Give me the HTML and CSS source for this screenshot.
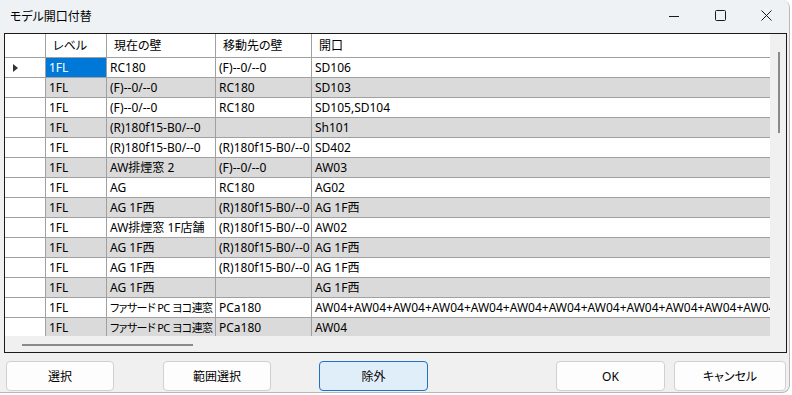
FILE: index.html
```html
<!DOCTYPE html>
<html lang="ja">
<head>
    <meta charset="UTF-8">
    <title>モデル開口付替</title>
    <link rel="stylesheet" href="styles.css">
</head>
<body>
    <div class="window">
        <div class="titlebar">
            <span class="title">モデル開口付替</span>
            <div class="controls">
                <div class="ctl">
                    <svg width="10" height="10" viewBox="0 0 10 10"><path d="M0 5.5H10" stroke="#1a1a1a" stroke-width="1"/></svg>
                </div>
                <div class="ctl">
                    <svg width="11" height="11" viewBox="0 0 11 11"><rect x="0.5" y="0.5" width="10" height="10" rx="1" fill="none" stroke="#1a1a1a" stroke-width="1"/></svg>
                </div>
                <div class="ctl">
                    <svg width="11" height="11" viewBox="0 0 11 11"><path d="M0.5 0.5L10.5 10.5M10.5 0.5L0.5 10.5" stroke="#1a1a1a" stroke-width="1"/></svg>
                </div>
            </div>
        </div>

        <div class="client">
            <div class="grid">
                <div class="grid-body">
                    <div class="rows">
                        <div class="row header">
                            <div class="cell rh"></div>
                            <div class="cell c-level">レベル</div>
                            <div class="cell c-cur">現在の壁</div>
                            <div class="cell c-dst">移動先の壁</div>
                            <div class="cell c-open">開口</div>
                        </div>
                        <div class="row">
                            <div class="cell rh"><span class="arrow"></span></div>
                            <div class="cell c-level selected">1FL</div>
                            <div class="cell c-cur">RC180</div>
                            <div class="cell c-dst">(F)--0/--0</div>
                            <div class="cell c-open">SD106</div>
                        </div>
                        <div class="row alt">
                            <div class="cell rh"></div>
                            <div class="cell c-level">1FL</div>
                            <div class="cell c-cur">(F)--0/--0</div>
                            <div class="cell c-dst">RC180</div>
                            <div class="cell c-open">SD103</div>
                        </div>
                        <div class="row">
                            <div class="cell rh"></div>
                            <div class="cell c-level">1FL</div>
                            <div class="cell c-cur">(F)--0/--0</div>
                            <div class="cell c-dst">RC180</div>
                            <div class="cell c-open">SD105,SD104</div>
                        </div>
                        <div class="row alt">
                            <div class="cell rh"></div>
                            <div class="cell c-level">1FL</div>
                            <div class="cell c-cur">(R)180f15-B0/--0</div>
                            <div class="cell c-dst"></div>
                            <div class="cell c-open">Sh101</div>
                        </div>
                        <div class="row">
                            <div class="cell rh"></div>
                            <div class="cell c-level">1FL</div>
                            <div class="cell c-cur">(R)180f15-B0/--0</div>
                            <div class="cell c-dst">(R)180f15-B0/--0</div>
                            <div class="cell c-open">SD402</div>
                        </div>
                        <div class="row alt">
                            <div class="cell rh"></div>
                            <div class="cell c-level">1FL</div>
                            <div class="cell c-cur">AW排煙窓 2</div>
                            <div class="cell c-dst">(F)--0/--0</div>
                            <div class="cell c-open">AW03</div>
                        </div>
                        <div class="row">
                            <div class="cell rh"></div>
                            <div class="cell c-level">1FL</div>
                            <div class="cell c-cur">AG</div>
                            <div class="cell c-dst">RC180</div>
                            <div class="cell c-open">AG02</div>
                        </div>
                        <div class="row alt">
                            <div class="cell rh"></div>
                            <div class="cell c-level">1FL</div>
                            <div class="cell c-cur">AG 1F西</div>
                            <div class="cell c-dst">(R)180f15-B0/--0</div>
                            <div class="cell c-open">AG 1F西</div>
                        </div>
                        <div class="row">
                            <div class="cell rh"></div>
                            <div class="cell c-level">1FL</div>
                            <div class="cell c-cur">AW排煙窓 1F店舗</div>
                            <div class="cell c-dst">(R)180f15-B0/--0</div>
                            <div class="cell c-open">AW02</div>
                        </div>
                        <div class="row alt">
                            <div class="cell rh"></div>
                            <div class="cell c-level">1FL</div>
                            <div class="cell c-cur">AG 1F西</div>
                            <div class="cell c-dst">(R)180f15-B0/--0</div>
                            <div class="cell c-open">AG 1F西</div>
                        </div>
                        <div class="row">
                            <div class="cell rh"></div>
                            <div class="cell c-level">1FL</div>
                            <div class="cell c-cur">AG 1F西</div>
                            <div class="cell c-dst">(R)180f15-B0/--0</div>
                            <div class="cell c-open">AG 1F西</div>
                        </div>
                        <div class="row alt">
                            <div class="cell rh"></div>
                            <div class="cell c-level">1FL</div>
                            <div class="cell c-cur">AG 1F西</div>
                            <div class="cell c-dst"></div>
                            <div class="cell c-open">AG 1F西</div>
                        </div>
                        <div class="row">
                            <div class="cell rh"></div>
                            <div class="cell c-level">1FL</div>
                            <div class="cell c-cur"><span class="tight">ファサード PC ヨコ連窓</span></div>
                            <div class="cell c-dst">PCa180</div>
                            <div class="cell c-open">AW04+AW04+AW04+AW04+AW04+AW04+AW04+AW04+AW04+AW04+AW04+AW04+AW04</div>
                        </div>
                        <div class="row alt">
                            <div class="cell rh"></div>
                            <div class="cell c-level">1FL</div>
                            <div class="cell c-cur"><span class="tight">ファサード PC ヨコ連窓</span></div>
                            <div class="cell c-dst">PCa180</div>
                            <div class="cell c-open">AW04</div>
                        </div>
                    </div>
                    <div class="vscroll"><div class="vthumb"></div></div>
                </div>
                <div class="hscroll"><div class="hthumb"></div></div>
            </div>

            <div class="buttons">
                <button class="btn b-select">選択</button>
                <button class="btn b-range">範囲選択</button>
                <button class="btn b-exclude default">除外</button>
                <button class="btn b-ok">OK</button>
                <button class="btn b-cancel">キャンセル</button>
            </div>
        </div>
    </div>
</body>
</html>
```

FILE: styles.css
```css
html, body {
    margin: 0;
    padding: 0;
}
body {
    width: 792px;
    height: 395px;
    background-color: #ffffff;
    font-family: "Noto Sans", "Noto Sans CJK JP", sans-serif;
    font-size: 12px;
    color: #000;
    font-feature-settings: "palt";
    overflow: hidden;
}
.window {
    width: 790px;
    height: 393px;
    background: #f0f0f0;
    border-right: 1px solid #b8b8b8;
    border-bottom: 1px solid #b8b8b8;
    border-radius: 0 8px 8px 0;
    box-sizing: border-box;
    overflow: hidden;
}
.titlebar {
    height: 33px;
    background: #eef2f5;
    display: flex;
    align-items: center;
}
.title {
    margin-left: 10px;
    flex: 1;
    line-height: 30px;
}
.controls {
    display: flex;
    align-self: flex-start;
}
.ctl {
    width: 46px;
    height: 31px;
    display: flex;
    align-items: center;
    justify-content: center;
}

/* grid */
.grid {
    margin-left: 4px;
    width: 783px;
    height: 320px;
    border: 1px solid #1a1a1a;
    box-sizing: border-box;
    background: #f0f0f0;
    display: flex;
    flex-direction: column;
}
.grid-body {
    display: flex;
    height: 302px;
}
.rows {
    width: 765px;
    overflow: hidden;
    background: #fff;
}
.row {
    display: flex;
    height: 20px;
    border-bottom: 1px solid #a0a0a0;
    box-sizing: border-box;
    background: #fff;
}
.row.alt {
    background: #dadada;
}
.row.header {
    height: 24px;
    background: #fff;
}
.cell {
    height: 19px;
    line-height: 19px;
    padding-left: 3px;
    border-right: 1px solid #a0a0a0;
    box-sizing: border-box;
    white-space: nowrap;
    overflow: hidden;
    flex-shrink: 0;
}
.header .cell {
    height: 23px;
    line-height: 23px;
    padding-left: 7px;
}
.cell.rh {
    width: 41px;
    background: #fff;
    display: flex;
    align-items: center;
}
.c-level { width: 61px; }
.c-cur { width: 109px; }
.c-dst { width: 96px; }
.c-open {
    width: 458px;
    border-right: none;
}
.tight {
    font-size: 11px;
    letter-spacing: -0.6px;
}
.cell.selected {
    background: #0078d7;
    color: #fff;
}
.arrow {
    margin-left: 5px;
    width: 0;
    height: 0;
    border-top: 4px solid transparent;
    border-bottom: 4px solid transparent;
    border-left: 5px solid #333;
}

.vscroll {
    width: 16px;
    background: #f0f0f0;
    padding-top: 18px;
    box-sizing: border-box;
}
.vthumb {
    margin-left: 8px;
    width: 2px;
    height: 81px;
    background: #8a8a8a;
}
.hscroll {
    height: 16px;
    padding-top: 8px;
    box-sizing: border-box;
    background: #f0f0f0;
}
.hthumb {
    margin-left: 17px;
    width: 171px;
    height: 2px;
    background: #8a8a8a;
}

/* buttons */
.buttons {
    display: flex;
    margin-top: 8px;
}
.btn {
    height: 30px;
    background: #fdfdfd;
    border: 1px solid #d0d0d0;
    border-radius: 4px;
    font-family: inherit;
    font-size: 12px;
    font-feature-settings: "palt";
    color: #000;
    padding: 0;
}
.b-select { margin-left: 6px; width: 108px; }
.b-range { margin-left: 49px; width: 108px; }
.b-exclude { margin-left: 48px; width: 109px; }
.b-ok { margin-left: 128px; width: 109px; }
.b-cancel { margin-left: 9px; width: 112px; }
.btn.default {
    background: #e0eef9;
    border-color: #1f72c8;
}
```
